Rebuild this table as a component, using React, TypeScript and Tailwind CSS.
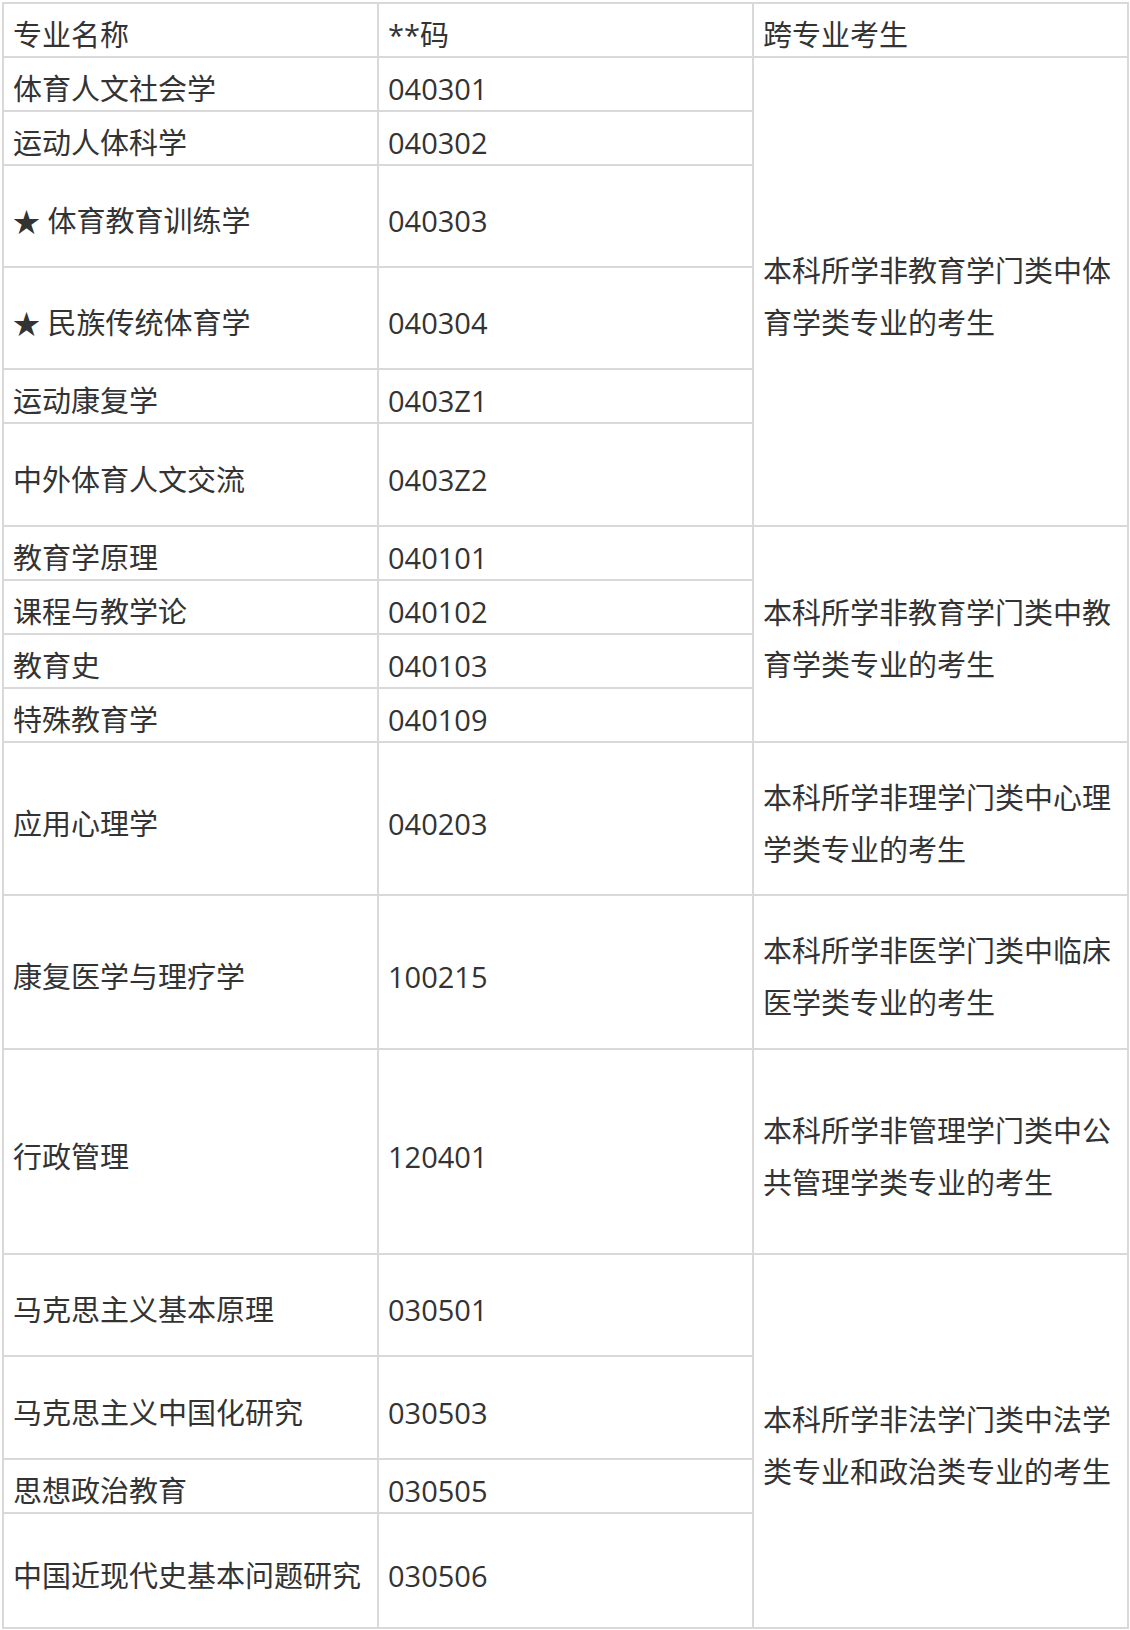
import React from 'react';

type Row = {
  name: string;
  code: string;
  h: string;
  star?: boolean;
  note?: string[];
  span?: number;
};

const rows: Row[] = [
  { name: '体育人文社会学', code: '040301', h: 'h-[54px]', note: ['本科所学非教育学门类中体', '育学类专业的考生'], span: 6 },
  { name: '运动人体科学', code: '040302', h: 'h-[54px]' },
  { name: '体育教育训练学', code: '040303', h: 'h-[102px]', star: true },
  { name: '民族传统体育学', code: '040304', h: 'h-[102px]', star: true },
  { name: '运动康复学', code: '0403Z1', h: 'h-[54px]' },
  { name: '中外体育人文交流', code: '0403Z2', h: 'h-[103px]' },
  { name: '教育学原理', code: '040101', h: 'h-[54px]', note: ['本科所学非教育学门类中教', '育学类专业的考生'], span: 4 },
  { name: '课程与教学论', code: '040102', h: 'h-[54px]' },
  { name: '教育史', code: '040103', h: 'h-[54px]' },
  { name: '特殊教育学', code: '040109', h: 'h-[54px]' },
  { name: '应用心理学', code: '040203', h: 'h-[153px]', note: ['本科所学非理学门类中心理', '学类专业的考生'], span: 1 },
  { name: '康复医学与理疗学', code: '100215', h: 'h-[154px]', note: ['本科所学非医学门类中临床', '医学类专业的考生'], span: 1 },
  { name: '行政管理', code: '120401', h: 'h-[205px]', note: ['本科所学非管理学门类中公', '共管理学类专业的考生'], span: 1 },
  { name: '马克思主义基本原理', code: '030501', h: 'h-[102px]', note: ['本科所学非法学门类中法学', '类专业和政治类专业的考生'], span: 4 },
  { name: '马克思主义中国化研究', code: '030503', h: 'h-[103px]' },
  { name: '思想政治教育', code: '030505', h: 'h-[54px]' },
  { name: '中国近现代史基本问题研究', code: '030506', h: 'h-[115px]' },
];

const base = 'border-2 border-[#d9d9d9] px-[9px] pt-[10px] pb-0 align-middle text-left font-normal whitespace-nowrap';
const cell = `${base} leading-[42px]`;
const noteCell = `${base} leading-[52px]`;

export default function App() {
  return (
    <div
      className="min-h-[1630px] w-[1130px] bg-white pl-[2px] pt-[2px] text-[29px] text-[#333333]"
      style={{ fontFamily: '"Open Sans", "Noto Sans CJK SC", sans-serif' }}
    >
      <table className="w-[1125px] table-fixed border-collapse">
        <colgroup>
          <col className="w-[375px]" />
          <col className="w-[375px]" />
          <col className="w-[375px]" />
        </colgroup>
        <tbody>
          <tr className="h-[54px]">
            <td className={cell}>专业名称</td>
            <td className={cell}>**码</td>
            <td className={cell}>跨专业考生</td>
          </tr>
          {rows.map((r) => (
            <tr key={r.code} className={r.h}>
              <td className={cell}>
                {r.star && <span className="text-[27px]">★</span>}
                {r.star && ' '}
                {r.name}
              </td>
              <td className={cell}>{r.code}</td>
              {r.note && (
                <td rowSpan={r.span} className={noteCell}>
                  {r.note[0]}
                  <br />
                  {r.note[1]}
                </td>
              )}
            </tr>
          ))}
        </tbody>
      </table>
    </div>
  );
}
